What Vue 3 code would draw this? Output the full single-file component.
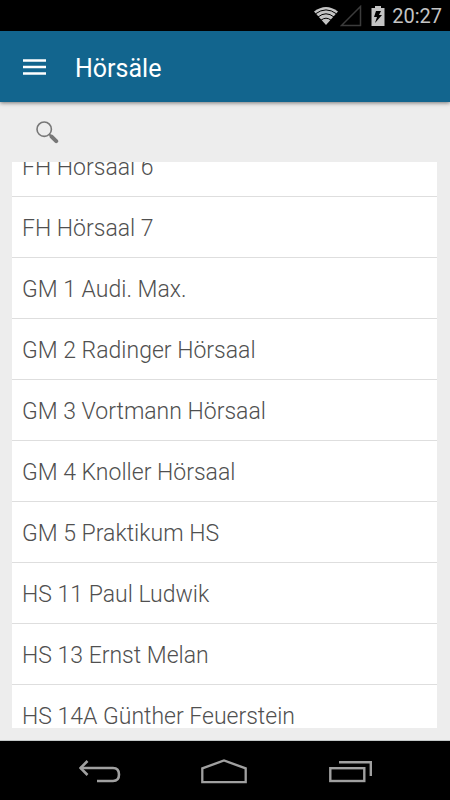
<script setup>
import { ref, onMounted } from 'vue'

const rooms = [
  'FH Hörsaal 6',
  'FH Hörsaal 7',
  'GM 1 Audi. Max.',
  'GM 2 Radinger Hörsaal',
  'GM 3 Vortmann Hörsaal',
  'GM 4 Knoller Hörsaal',
  'GM 5 Praktikum HS',
  'HS 11 Paul Ludwik',
  'HS 13 Ernst Melan',
  'HS 14A Günther Feuerstein',
]

const query = ref('')
const list = ref(null)

// the list opens already scrolled a little
onMounted(() => {
  list.value.scrollTop = 26
})
</script>

<template>
  <div class="app">
    <div class="status-bar">
      <svg class="wifi" width="24" height="20" viewBox="0 0 24 20">
        <path d="M0 5.5 Q12 -3.5 24 5.5 L12 19 Z" fill="#c4c4c4" />
        <path d="M1.5 7.8 Q12 0 22.5 7.8 M4 11 Q12 4.6 20 11 M7 14.2 Q12 10.2 17 14.2" fill="none" stroke="#000" stroke-width="1" />
      </svg>
      <svg class="signal" width="22" height="22" viewBox="0 0 22 22">
        <path d="M20.5 1.5 V20.5 H1.5 Z" fill="none" stroke="#3c3c3c" stroke-width="1.5" />
      </svg>
      <svg class="battery" width="14" height="20" viewBox="0 0 14 20">
        <path d="M4 0 H10 V2 H13.5 V20 H0.5 V2 H4 Z" fill="#c4c4c4" />
        <path d="M5 5 H10 L8 9 H11 L4 17 L6 11 H3 Z" fill="#000" />
      </svg>
      <span class="clock">20:27</span>
    </div>

    <header class="toolbar">
      <button class="menu-btn" aria-label="Menu">
        <svg width="24" height="16" viewBox="0 0 24 16">
          <path d="M0 1.5 H23 M0 8 H23 M0 14.5 H23" stroke="#fff" stroke-width="2.6" />
        </svg>
      </button>
      <h1 class="title">Hörsäle</h1>
    </header>

    <main class="content">
      <label class="search">
        <svg width="24" height="24" viewBox="0 0 24 24">
          <circle cx="8.2" cy="9.2" r="7.2" fill="none" stroke="#777" stroke-width="1.6" />
          <path d="M13 14 L15.5 16.5" stroke="#777" stroke-width="1.8" />
          <path d="M15.6 16.6 L20.2 21.2" stroke="#777" stroke-width="4" stroke-linecap="round" />
        </svg>
        <input v-model="query" type="text" aria-label="Search" />
      </label>

      <ul ref="list" class="rooms">
        <li v-for="room in rooms" :key="room" class="room">{{ room }}</li>
      </ul>
    </main>

    <nav class="nav-bar">
      <button aria-label="Back">
        <svg width="42" height="24" viewBox="0 0 42 24">
          <path d="M1 9 H34 Q40 9 40 15.5 Q40 22 34 22 H18" fill="none" stroke="#a0a0a0" stroke-width="2.6" />
          <path d="M8.5 2 L1.5 9 L8.5 16" fill="none" stroke="#a0a0a0" stroke-width="2.6" />
        </svg>
      </button>
      <button aria-label="Home">
        <svg width="46" height="26" viewBox="0 0 46 26">
          <path d="M1.3 10.3 L23 2.5 L44.7 10.3 V24.2 H1.3 Z" fill="none" stroke="#a0a0a0" stroke-width="2.3" />
        </svg>
      </button>
      <button aria-label="Recent apps">
        <svg width="46" height="24" viewBox="0 0 46 24">
          <rect x="3.3" y="9.2" width="34" height="12.8" fill="none" stroke="#a0a0a0" stroke-width="2.4" />
          <path d="M12 3.2 H43.8 V17" fill="none" stroke="#a0a0a0" stroke-width="2.4" />
        </svg>
      </button>
    </nav>
  </div>
</template>

<style>
body {
  margin: 0;
}
</style>

<style scoped>
.app {
  height: 100vh;
  display: flex;
  flex-direction: column;
  font-family: Roboto, "Liberation Sans", sans-serif;
  background: #ededed;
}

.status-bar {
  display: flex;
  align-items: center;
  justify-content: flex-end;
  height: 31px;
  padding-right: 8px;
  background: #000;
  flex-shrink: 0;
}
.signal { margin-left: 2px; }
.battery { margin: 0 7px 0 9px; }
.clock {
  font-size: 20px;
  line-height: 32px;
  color: #c4c4c4;
}

.toolbar {
  display: flex;
  align-items: center;
  height: 71px;
  padding: 0 23px;
  background: #12658e;
  box-shadow: 0 1px 4px rgba(0, 0, 0, 0.5);
  flex-shrink: 0;
}
.menu-btn {
  display: flex;
  padding: 0;
  border: 0;
  background: none;
}
.title {
  margin: 0 0 0 28px;
  padding-top: 4px;
  font-size: 25px;
  font-weight: 400;
  line-height: 32px;
  color: #fff;
}

.content {
  flex: 1;
  min-height: 0;
  display: flex;
  flex-direction: column;
  padding: 0 13px 12px 12px;
  border-bottom: 1px solid #c4c8c8;
}

.search {
  display: flex;
  align-items: center;
  height: 60px;
  padding: 0 24px;
  gap: 8px;
  flex-shrink: 0;
}
.search input {
  flex: 1;
  min-width: 0;
  border: 0;
  outline: 0;
  background: none;
  font: inherit;
  font-size: 20px;
  color: #757575;
}

.rooms {
  flex: 1;
  min-height: 0;
  margin: 0;
  padding: 0;
  list-style: none;
  background: #fff;
  overflow-y: auto;
  scrollbar-width: none;
}
.room {
  height: 60px;
  padding: 0 10px;
  border-bottom: 1px solid #dedede;
  font-size: 23px;
  font-weight: 300;
  line-height: 63px;
  color: #505050;
}

.nav-bar {
  display: flex;
  align-items: center;
  justify-content: center;
  gap: 80px;
  height: 59px;
  padding: 1px 0 0 2px;
  box-sizing: border-box;
  background: #000;
  flex-shrink: 0;
}
.nav-bar button {
  display: flex;
  padding: 0;
  border: 0;
  background: none;
}
</style>
